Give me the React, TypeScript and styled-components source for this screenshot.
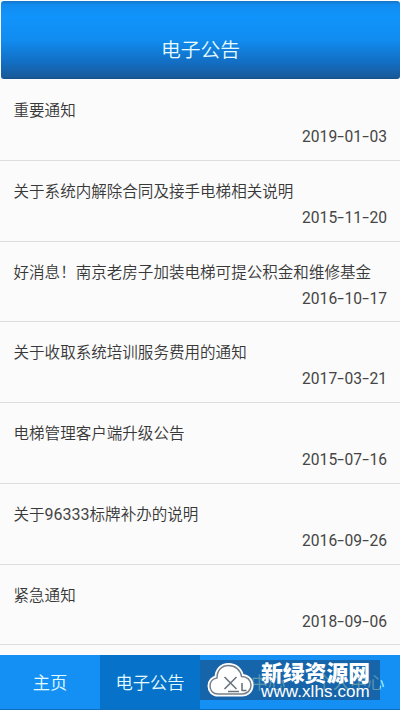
import React from "react";
import styled, { createGlobalStyle } from "styled-components";

const Global = createGlobalStyle`
  * { box-sizing: border-box; }
  body { margin: 0; background: #fafafa; font-family: Roboto, "Noto Sans CJK SC", sans-serif; }
`;
const Screen = styled.div`
  position: relative;
  width: 400px;
  height: 710px;
  display: flex;
  flex-direction: column;
  overflow: hidden;
  background: #fbfbfb;
`;
const Header = styled.header`
  height: 78px;
  flex: none;
  margin: 1px 0 0 1px;
  border-radius: 3px;
  padding-top: 18px;
  display: flex;
  align-items: center;
  justify-content: center;
  background: linear-gradient(#1475c8 0, #128cf1 5%, #1094fb 20%, #108cf0 50%, #126fc4 78%, #195b9c 97%, #14508b 100%);
`;
const Title = styled.h1`
  margin: 0;
  color: #e8fbff;
  font-size: 19.8px;
  font-weight: 350;
  font-family: "Noto Sans CJK SC", sans-serif;
  line-height: 28px;
`;
const List = styled.main`
  flex: 1;
  min-height: 0;
  padding-top: 1px;
  overflow: hidden;
`;
const Row = styled.article`
  height: 80.75px;
  padding: 17.2px 13px 0 13.5px;
  border-bottom: 1px solid #dedede;
  color: #383838;
`;
const RowTitle = styled.div`
  height: 24px;
  font: 350 15.55px/24px "Noto Sans CJK SC", sans-serif;
  white-space: nowrap;
`;
const Digits = styled.span`
  font-family: Roboto, sans-serif;
  font-size: 16px;
  font-weight: 400;
  line-height: 1;
  color: #454545;
`;
const DateText = styled.time`
  display: flex;
  justify-content: flex-end;
  margin-top: 4px;
  color: #454545;
  font: 400 15.6px/24px Roboto, sans-serif;
`;
const Dash = styled.span`
  width: 7.4px;
  display: flex;
  justify-content: center;
  transform: scaleX(1.55);
`;
const Nav = styled.nav`
  height: 55px;
  flex: none;
  display: grid;
  grid-template-columns: repeat(4, 100px);
  background: #1490f5;
  border-bottom: 1px solid #0b6fbd;
`;
const Tab = styled.div<{ $active?: boolean; $dim?: boolean }>`
  display: flex;
  align-items: center;
  justify-content: center;
  font: 350 17.3px/26px "Noto Sans CJK SC", sans-serif;
  color: ${(p) => (p.$dim ? "#a6f4f5" : "#e3fbff")};
  background: ${(p) => (p.$active ? "#0672c9" : "transparent")};
`;
const HalfLabel = styled.span`
  margin-left: 36px;
`;
const Watermark = styled.aside`
  position: absolute;
  left: 200px;
  top: 660px;
  width: 180px;
  height: 40px;
  background: rgba(24, 58, 98, 0.5);
  color: #fff;
  display: flex;
`;
const Brand = styled.div`
  flex: 1;
  white-space: nowrap;
`;
const BrandName = styled.div`
  font: 900 21.8px/22px "Noto Sans CJK SC", sans-serif;
  margin-top: 1px;
`;
const BrandUrl = styled.div`
  font: 400 17px/17px "Liberation Sans", sans-serif;
  letter-spacing: 0.1px;
`;

const notices = [
  ["重要通知", "2019-01-03"],
  ["关于系统内解除合同及接手电梯相关说明", "2015-11-20"],
  ["好消息！南京老房子加装电梯可提公积金和维修基金", "2016-10-17"],
  ["关于收取系统培训服务费用的通知", "2017-03-21"],
  ["电梯管理客户端升级公告", "2015-07-16"],
  ["关于96333标牌补办的说明", "2016-09-26"],
  ["紧急通知", "2018-09-06"],
];

function NoticeTitle({ value }: { value: string }) {
  return (
    <RowTitle>
      {value.split(/(\d+)/).map((part, i) => (i % 2 ? <Digits key={i}>{part}</Digits> : part))}
    </RowTitle>
  );
}

function NoticeDate({ value }: { value: string }) {
  const [y, m, d] = value.split("-");
  return <DateText>{y}<Dash>-</Dash>{m}<Dash>-</Dash>{d}</DateText>;
}

function CloudLogo() {
  const cloud = "M18 34c-5 0-8-3.500-8-8 0-4.500 3-7.500 7-8C17 10 22 5.500 28.500 5.500c7 0 12 4.500 13 11C47 16.500 51 20 51 25.300S47 34 42 34z";
  return (
    <svg width="61" height="40" viewBox="0 0 61 40" fill="none" strokeLinejoin="round">
      <path d={cloud} fill="#fff" stroke="#fff" strokeWidth="5" />
      <path d={cloud} stroke="#75808b" strokeWidth="1.500" />
      <path d="M24.500 17l12 12M36.500 17l-12 12M28 31.500h11M42 23v7.500h4.500" stroke="#69747f" strokeWidth="1.600" />
    </svg>
  );
}

export default function App() {
  return (
    <>
      <Global />
      <Screen>
        <Header><Title>电子公告</Title></Header>
        <List>
          {notices.map(([title, date]) => (
            <Row key={title}><NoticeTitle value={title} /><NoticeDate value={date} /></Row>
          ))}
        </List>
        <Nav>
          <Tab>主页</Tab>
          <Tab $active>电子公告</Tab>
          <Tab $dim><HalfLabel>中心</HalfLabel></Tab>
          <Tab $dim>个人中心</Tab>
        </Nav>
        <Watermark>
          <CloudLogo />
          <Brand><BrandName>新绿资源网</BrandName><BrandUrl>www.xlhs.com</BrandUrl></Brand>
        </Watermark>
      </Screen>
    </>
  );
}
